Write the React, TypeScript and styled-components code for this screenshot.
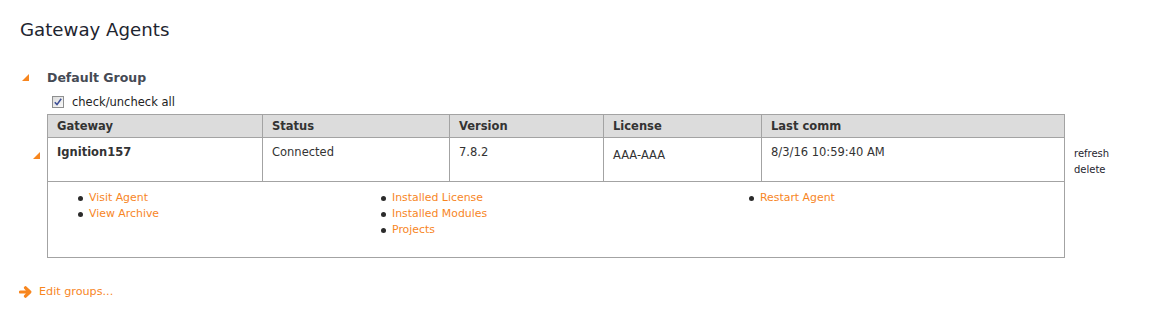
import styled, { createGlobalStyle } from "styled-components";

const GlobalStyle = createGlobalStyle`
    html, body {
        margin: 0;
        padding: 0;
        background: #fff;
    }
    body {
        font-family: "DejaVu Sans", Verdana, sans-serif;
        color: #333;
    }
`;

const ORANGE = "#f7861f";
const BORDER = "#a3a3a3";

const Page = styled.div`
    padding: 19px 20px 0 20px;
`;

const Title = styled.h1`
    margin: 0;
    font-size: 18.2px;
    font-weight: 400;
    color: #1e2530;
    line-height: 22px;
`;

const Group = styled.section`
    margin-top: 27px;
`;

const GroupHead = styled.div`
    display: flex;
    align-items: center;
    height: 18px;
`;

const Toggle = styled.span<{ $offset: number }>`
    display: inline-block;
    width: 0;
    height: 0;
    margin-left: ${(p) => p.$offset}px;
    border-left: 7px solid transparent;
    border-bottom: 7px solid ${ORANGE};
`;

const GroupName = styled.h2`
    margin: 0 0 0 18px;
    font-size: 12.5px;
    font-weight: 700;
    color: #454a54;
`;

const CheckAll = styled.label`
    display: flex;
    align-items: center;
    gap: 8px;
    margin: 8px 0 0 32px;
    height: 16px;
    font-size: 11.5px;
    color: #222;
`;

const CheckBox = styled.span`
    display: inline-flex;
    align-items: center;
    justify-content: center;
    width: 10px;
    height: 10px;
    border: 1px solid #8e8f8f;
    background: linear-gradient(135deg, #dcdcdc, #fafafa);
`;

const Table = styled.table`
    border-collapse: collapse;
    margin-top: 4px;
    font-size: 11.5px;
`;

const Gutter = styled.td`
    width: 27px;
    padding: 0;
    vertical-align: top;
`;

const RowToggle = styled.div`
    padding: 10px 0 0 13px;
`;

const HeadCell = styled.th<{ $w: number }>`
    width: ${(p) => p.$w}px;
    height: 23px;
    padding: 0 0 0 9px;
    box-sizing: border-box;
    text-align: left;
    font-weight: 700;
    color: #333;
    background: #dcdcdc;
    border: 1px solid ${BORDER};
`;

const Cell = styled.td<{ $bold?: boolean; $shift?: number }>`
    height: 44px;
    padding: ${(p) => 7 + (p.$shift || 0)}px 0 0 9px;
    box-sizing: border-box;
    vertical-align: top;
    font-weight: ${(p) => (p.$bold ? 700 : 400)};
    color: #333;
    border: 1px solid ${BORDER};
`;

const Actions = styled.td`
    vertical-align: top;
    padding: 8px 0 0 9px;
    font-size: 10px;
    line-height: 16px;
    color: #1f2530;
    white-space: nowrap;
`;

const ActionLink = styled.div`
    cursor: pointer;
`;

const DetailCell = styled.td`
    height: 76px;
    padding: 8px 0 0 0;
    box-sizing: border-box;
    vertical-align: top;
    border: 1px solid ${BORDER};
`;

const LinkColumns = styled.div`
    display: grid;
    grid-template-columns: 303px 368px 1fr;
    padding-left: 30px;
`;

const LinkList = styled.ul`
    margin: 0;
    padding: 0;
    list-style: none;
`;

const LinkItem = styled.li`
    display: flex;
    align-items: center;
    gap: 6px;
    height: 16px;
    &::before {
        content: "";
        width: 5px;
        height: 5px;
        border-radius: 50%;
        background: #2b2b2b;
    }
`;

const OrangeLink = styled.a`
    font-size: 10.9px;
    line-height: 16px;
    color: ${ORANGE};
    text-decoration: none;
    cursor: pointer;
`;

const EditGroups = styled.a`
    display: flex;
    align-items: center;
    gap: 7px;
    margin-top: 27px;
    margin-left: -1px;
    color: ${ORANGE};
    font-size: 11.2px;
    text-decoration: none;
`;

const columns = [
    { label: "Gateway", w: 215 },
    { label: "Status", w: 187 },
    { label: "Version", w: 154 },
    { label: "License", w: 158 },
    { label: "Last comm", w: 303 },
];

const linkGroups = [
    ["Visit Agent", "View Archive"],
    ["Installed License", "Installed Modules", "Projects"],
    ["Restart Agent"],
];

function Arrow() {
    return (
        <svg width="13" height="12" viewBox="0 0 13 12">
            <path
                d="M1.5 6H10M6.5 1.8L10.8 6L6.5 10.2"
                fill="none"
                stroke={ORANGE}
                strokeWidth="3.2"
                strokeLinecap="round"
                strokeLinejoin="round"
            />
        </svg>
    );
}

export default function App() {
    return (
        <Page>
            <GlobalStyle />
            <Title>Gateway Agents</Title>
            <Group>
                <GroupHead>
                    <Toggle $offset={2} />
                    <GroupName>Default Group</GroupName>
                </GroupHead>
                <CheckAll>
                    <CheckBox>
                        <svg width="8" height="8" viewBox="0 0 8 8">
                            <path d="M0.8 4.2L3 6.6L7.2 0.8" fill="none" stroke="#3d4f96" strokeWidth="1.6" />
                        </svg>
                    </CheckBox>
                    check/uncheck all
                </CheckAll>
                <Table>
                    <thead>
                        <tr>
                            <Gutter />
                            {columns.map((c) => (
                                <HeadCell key={c.label} $w={c.w}>{c.label}</HeadCell>
                            ))}
                            <Gutter />
                        </tr>
                    </thead>
                    <tbody>
                        <tr>
                            <Gutter>
                                <RowToggle>
                                    <Toggle $offset={0} />
                                </RowToggle>
                            </Gutter>
                            <Cell $bold>Ignition157</Cell>
                            <Cell>Connected</Cell>
                            <Cell>7.8.2</Cell>
                            <Cell $shift={3}>AAA-AAA</Cell>
                            <Cell>8/3/16 10:59:40 AM</Cell>
                            <Actions>
                                <ActionLink>refresh</ActionLink>
                                <ActionLink>delete</ActionLink>
                            </Actions>
                        </tr>
                        <tr>
                            <Gutter />
                            <DetailCell colSpan={5}>
                                <LinkColumns>
                                    {linkGroups.map((g, i) => (
                                        <LinkList key={i}>
                                            {g.map((l) => (
                                                <LinkItem key={l}>
                                                    <OrangeLink>{l}</OrangeLink>
                                                </LinkItem>
                                            ))}
                                        </LinkList>
                                    ))}
                                </LinkColumns>
                            </DetailCell>
                            <Gutter />
                        </tr>
                    </tbody>
                </Table>
            </Group>
            <EditGroups>
                <Arrow />
                Edit groups...
            </EditGroups>
        </Page>
    );
}
